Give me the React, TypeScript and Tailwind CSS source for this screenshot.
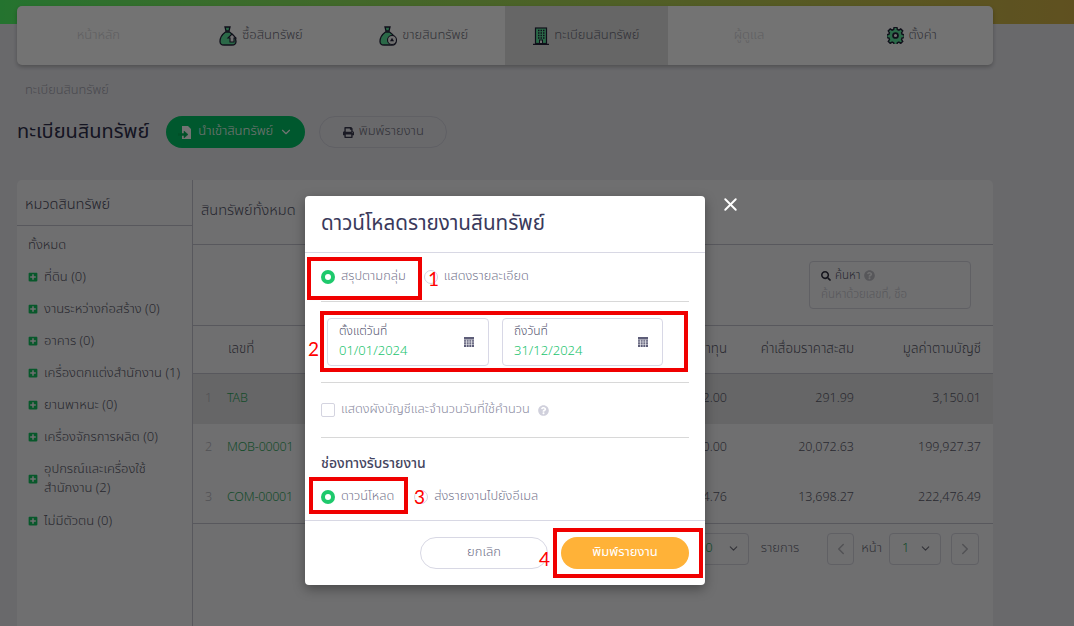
// Asset register page with the download-report dialog open and red annotation boxes on top.
import { ChevronDown, ChevronLeft, ChevronRight, X } from 'lucide-react';
import { FaPlusSquare, FaPrint, FaQuestionCircle, FaSearch } from 'react-icons/fa';

const FONT = "font-['Noto_Sans_Thai','Noto_Sans','Open_Sans',sans-serif]";

function BagIcon({ mark }: { mark: 'buy' | 'sell' }) {
	return (
		<svg width="18" height="20" viewBox="0 0 18 20">
			<path d="M6 1h5l-1 4H7z" fill="#5fe8a0" stroke="#23233a" strokeWidth="1.3" />
			<path d="M6.500 6C3 8.500 1 12 1 15.500 1 18 3 19 5 19h8c2 0 4-1 4-3.500C17 12 14 8.500 10.500 6z" fill="#5fe8a0" stroke="#23233a" strokeWidth="1.3" />
			{mark === 'buy' ? (
				<path d="M9 12l4-4 4 4h-2v4h-4v-4z" fill="#f5f5f5" stroke="#23233a" strokeWidth="1.1" />
			) : (
				<>
					<circle cx="13" cy="14" r="4.500" fill="#f5f5f5" stroke="#23233a" strokeWidth="1.1" />
					<path d="M13 11.800l2 3.400h-4z" fill="#23233a" />
				</>
			)}
		</svg>
	);
}

function BuildingIcon() {
	return (
		<svg width="16" height="18" viewBox="0 0 16 18">
			<rect x="2.500" y="1" width="11" height="15.500" fill="#5fe8a0" stroke="#23233a" strokeWidth="1.200" />
			<path d="M5 3.500h1.500M7.500 3.500H9M10 3.500h1.500M5 6h1.500M7.500 6H9M10 6h1.500M5 8.500h1.500M7.500 8.500H9M10 8.500h1.500M5 11h1.500M7.500 11H9M10 11h1.500" stroke="#23233a" strokeWidth="1.300" />
			<rect x="6.500" y="13" width="3" height="3.500" fill="#f5f5f5" stroke="#23233a" />
			<path d="M0 17.300h16" stroke="#23233a" strokeWidth="1.200" />
		</svg>
	);
}

function GearIcon() {
	return (
		<svg width="17" height="17" viewBox="0 0 24 24">
			<path d="M10 1.500h4l.6 3 2.200.9 2.600-1.700 2.800 2.800-1.700 2.600.9 2.200 3 .6v4l-3 .6-.9 2.200 1.700 2.600-2.800 2.800-2.600-1.700-2.200.9-.6 3h-4l-.6-3-2.200-.9-2.600 1.700-2.800-2.800 1.700-2.600-.9-2.200-3-.6v-4l3-.6.9-2.200-1.700-2.600 2.800-2.800 2.600 1.700 2.200-.9z" transform="translate(0 -1)" fill="#5fe8a0" stroke="#23233a" strokeWidth="2" />
			<circle cx="12" cy="12" r="3.500" fill="#f5f5f5" stroke="#23233a" strokeWidth="2.500" />
		</svg>
	);
}

function ImportIcon() {
	return (
		<svg width="14" height="15" viewBox="0 0 14 15">
			<path d="M4 1h6l3 3v10H4z" fill="#fff" />
			<path d="M0 8.500h6V6l4 3.500L6 13v-2.500H0z" fill="#00b45a" stroke="#00b45a" strokeWidth=".5" />
		</svg>
	);
}

function CalendarIcon() {
	return (
		<svg width="10" height="10" viewBox="0 0 10 10">
			<rect width="10" height="10" fill="#5d5d78" />
			<path d="M0 2.800h10M0 5h10M0 7.300h10M2.500 2.800V10M5 2.800V10M7.500 2.800V10" stroke="#fff" strokeWidth=".6" />
		</svg>
	);
}

const navItems = [
	{ label: 'หน้าหลัก', muted: true },
	{ label: 'ซื้อสินทรัพย์', icon: <BagIcon mark="buy" /> },
	{ label: 'ขายสินทรัพย์', icon: <BagIcon mark="sell" /> },
	{ label: 'ทะเบียนสินทรัพย์', icon: <BuildingIcon />, active: true },
	{ label: 'ผู้ดูแล', muted: true },
	{ label: 'ตั้งค่า', icon: <GearIcon /> },
];

const categories = [
	{ label: 'ที่ดิน (0)' },
	{ label: 'งานระหว่างก่อสร้าง (0)' },
	{ label: 'อาคาร (0)' },
	{ label: 'เครื่องตกแต่งสำนักงาน (1)' },
	{ label: 'ยานพาหนะ (0)' },
	{ label: 'เครื่องจักรการผลิต (0)' },
	{ label: 'อุปกรณ์และเครื่องใช้สำนักงาน (2)', wrap: true },
	{ label: 'ไม่มีตัวตน (0)' },
];

const rows = [
	{ no: 1, code: 'TAB', cost: '3,442.00', dep: '291.99', book: '3,150.01', shade: true },
	{ no: 2, code: 'MOB-00001', cost: '220,000.00', dep: '20,072.63', book: '199,927.37' },
	{ no: 3, code: 'COM-00001', cost: '236,174.76', dep: '13,698.27', book: '222,476.49' },
];

function Radio({ on, label }: { on?: boolean; label: string }) {
	return (
		<label className="flex items-center gap-[6px]">
			{on ? (
				<span className="flex h-[14px] w-[14px] items-center justify-center rounded-full bg-[#1ec96c]">
					<span className="h-[6px] w-[6px] rounded-full bg-white" />
				</span>
			) : (
				<span className="h-[14px] w-[14px] rounded-full border border-[#d4d4e0] bg-white" />
			)}
			<span className="text-[12.800px] font-light text-[#77778f]">{label}</span>
		</label>
	);
}

function DateField({ label, value, className }: { label: string; value: string; className: string }) {
	return (
		<div className={'flex h-[48px] items-center justify-between rounded-[4px] border border-[#d8d8e6] pl-[11px] pr-[14px] ' + className}>
			<div className="flex flex-col">
				<span className="text-[12px] font-light leading-[16px] text-[#55556f]">{label}</span>
				<span className="pt-[2px] text-[13px] leading-[20px] font-light text-[#22c46e]">{value}</span>
			</div>
			<CalendarIcon />
		</div>
	);
}

function Mark({ className }: { className: string }) {
	return <div className={'pointer-events-none absolute border-[4px] border-[#f00000] ' + className} />;
}

function Digit({ className, children }: { className: string; children: React.ReactNode }) {
	return <span className={"absolute font-['Lato',sans-serif] text-[19px] font-normal leading-none text-[#ff0000] " + className}>{children}</span>;
}

export default function App() {
	return (
		<div className={'relative h-[626px] w-[1074px] overflow-hidden bg-[#e9e9ee] font-light ' + FONT}>
			<div className="h-[24px] bg-gradient-to-r from-[#50ff68] to-[#d3b247]" />

			<div className="-mt-[18px] pl-[17px] pr-[81px]">
				<nav className="flex h-[59px] overflow-hidden rounded-[5px] bg-white shadow-[0_2px_4px_rgba(0,0,0,0.25)]">
					{navItems.map((n) => (
						<div
							key={n.label}
							className={
								'flex flex-1 items-center justify-center gap-[5px] text-[13px] ' +
								(n.active ? 'bg-[#e2e2e2] ' : '') +
								(n.muted ? 'text-[#d4d4d8]' : 'text-[#6f6f7c]')
							}
						>
							{n.icon}
							<span>{n.label}</span>
						</div>
					))}
				</nav>

				<div className="mt-[15px] pl-[8px] text-[12.800px] leading-[20px] text-[#a4a4ae]">ทะเบียนสินทรัพย์</div>

				<div className="mt-[16px] flex h-[32px] items-center">
					<h1 className="text-[20px] font-normal text-[#2f2f4c]">ทะเบียนสินทรัพย์</h1>
					<button type="button" className="ml-[17px] flex h-[32px] w-[139px] items-center justify-center gap-[6px] rounded-full bg-[#00c466] text-[13px] text-white">
						<ImportIcon />
						นำเข้าสินทรัพย์
						<ChevronDown size={14} />
					</button>
					<button type="button" className="ml-[14px] flex h-[32px] w-[128px] items-center justify-center gap-[5px] rounded-full border border-[#d4d4de] text-[13px] text-[#6f6f7c]">
						<FaPrint size={11} className="text-[#3a3a50]" />
						พิมพ์รายงาน
					</button>
				</div>

				<div className="mt-[32px] flex h-[446px] rounded-t-[5px] bg-[#f6f6f8]">
					<aside className="w-[176px] shrink-0 border-r border-[#c4c4ce]">
						<div className="flex h-[46px] items-center border-b border-[#c4c4ce] pl-[8px] pt-[7px] text-[14.600px] text-[#4b4b60]">หมวดสินทรัพย์</div>
						<div className="pl-[11px] pt-[4px] text-[13px] text-[#585868]">
							<div className="flex h-[31px] items-center">ทั้งหมด</div>
							{categories.map((c) => (
								<div key={c.label} className={'flex min-h-[32px] items-center gap-[6px] leading-[19px] ' + (c.wrap ? 'py-[7px]' : '')}>
									<FaPlusSquare size={10} className="shrink-0 text-[#12c45f]" />
									<span className={c.wrap ? 'w-[130px]' : 'whitespace-nowrap'}>{c.label}</span>
								</div>
							))}
						</div>
					</aside>

					<main className="min-w-0 flex-1">
						<div className="flex h-[65px] items-center border-b border-[#c4c4ce] pl-[8px] text-[14.600px] text-[#55556a]">สินทรัพย์ทั้งหมด</div>
						<div className="flex h-[81px] items-start justify-end border-b border-[#c4c4ce] pr-[22px] pt-[16px]">
							<div className="h-[48px] w-[162px] rounded-[4px] border border-[#d4d4de] pl-[11px] pt-[4px]">
								<div className="flex items-center gap-[4px] text-[11.500px] leading-[19px] text-[#55556a]">
									<FaSearch size={10} className="text-[#2f2f40]" />
									ค้นหา
									<FaQuestionCircle size={11} className="text-[#c0c0c8]" />
								</div>
								<div className="text-[11.500px] leading-[19px] text-[#c4c4cc]">ค้นหาด้วยเลขที่, ชื่อ</div>
							</div>
						</div>

						<div className="flex h-[48px] items-center border-b border-[#c4c4ce] pr-[12px] text-[13.300px] text-[#585868]">
							<span className="ml-[35px] flex-1">เลขที่</span>
							<span className="w-[80px] text-right">ราคาทุน</span>
							<span className="w-[127px] text-right">ค่าเสื่อมราคาสะสม</span>
							<span className="w-[127px] text-right">มูลค่าตามบัญชี</span>
						</div>
						{rows.map((r) => (
							<div key={r.no} className={'flex h-[49.500px] items-center pr-[12px] text-[12.500px] leading-[20px] text-[#5c5c6c] ' + (r.shade ? 'bg-[#e2e2e4]' : '')}>
								<span className="ml-[12px] w-[22px] leading-[20px] text-[#b4b4bc]">{r.no}</span>
								<span className="flex-1 text-[12.500px] leading-[20px] tracking-[-0.2px] text-[#30a860]">{r.code}</span>
								<span className="w-[80px] text-right">{r.cost}</span>
								<span className="w-[127px] text-right">{r.dep}</span>
								<span className="w-[127px] text-right">{r.book}</span>
							</div>
						))}
						<div className="flex h-[51px] items-center justify-end border-t border-[#c4c4ce] pr-[14px] text-[13px] text-[#6f6f7c]">
							<div className="flex h-[32px] w-[60px] items-center justify-between rounded-[4px] border border-[#d4d4de] px-[8px]">
								<span className="text-[#30a860]">10</span>
								<ChevronDown size={13} />
							</div>
							<span className="ml-[12px]">รายการ</span>
							<div className="ml-[28px] flex h-[32px] w-[27px] items-center justify-center rounded-[4px] border border-[#d4d4de] text-[#b4b4bc]">
								<ChevronLeft size={18} />
							</div>
							<span className="ml-[7px]">หน้า</span>
							<div className="ml-[7px] flex h-[32px] w-[52px] items-center justify-between rounded-[4px] border border-[#d4d4de] pl-[12px] pr-[8px]">
								<span className="text-[#30a860]">1</span>
								<ChevronDown size={13} />
							</div>
							<div className="ml-[10px] flex h-[32px] w-[28px] items-center justify-center rounded-[4px] border border-[#d4d4de] text-[#b4b4bc]">
								<ChevronRight size={18} />
							</div>
						</div>
					</main>
				</div>
			</div>

			{/* dim layer + dialog */}
			<div className="absolute inset-0 bg-black/55" />
			<X size={21} strokeWidth={2.200} className="absolute left-[719.500px] top-[194px] text-white" />

			<div className="absolute left-[305px] top-[196px] w-[400px] rounded-[4px] bg-white shadow-[0_4px_12px_rgba(0,0,0,0.35)]">
				<div className="flex h-[57px] items-center border-b border-[#d8d8e4] pl-[16px] text-[20.700px] font-normal text-[#3a3a5c]">ดาวน์โหลดรายงานสินทรัพย์</div>

				<div className="px-[16px]">
					<div className="flex h-[49px] items-center gap-[18px] border-b border-[#d8d8d8]">
						<Radio on label="สรุปตามกลุ่ม" />
						<Radio label="แสดงรายละเอียด" />
					</div>
					<div className="flex h-[81px] items-center gap-[13px] border-b border-[#d8d8d8] pl-[6px]">
						<DateField label="ตั้งแต่วันที่" value="01/01/2024" className="w-[162px]" />
						<DateField label="ถึงวันที่" value="31/12/2024" className="w-[161px]" />
					</div>
					<div className="flex h-[55px] items-center gap-[6px] border-b border-[#d8d8d8]">
						<span className="h-[14px] w-[14px] rounded-[2px] border border-[#d4d4e0]" />
						<span className="text-[12.800px] text-[#8a8aa0]">แสดงผังบัญชีและจำนวนวันที่ใช้คำนวน</span>
						<FaQuestionCircle size={11} className="ml-[2px] text-[#d0d0dc]" />
					</div>
					<div className="pt-[13px] text-[14px] font-medium leading-[25px] text-[#46465f]">ช่องทางรับรายงาน</div>
					<div className="flex h-[44px] items-center gap-[20px] pb-[2px]">
						<Radio on label="ดาวน์โหลด" />
						<Radio label="ส่งรายงานไปยังอีเมล" />
					</div>
				</div>

				<div className="flex h-[65px] items-center justify-end gap-[13px] border-t border-[#d8d8e4] pr-[16px]">
					<button type="button" className="h-[32px] w-[128px] rounded-full border border-[#d8d8e4] text-[13px] text-[#6f6f88]">ยกเลิก</button>
					<button type="button" className="h-[32px] w-[128px] rounded-full bg-[#ffb238] text-[13px] font-normal text-white">พิมพ์รายงาน</button>
				</div>

				{/* red annotations drawn over the dialog */}
				<Mark className="left-[2px] top-[61px] h-[43px] w-[115px]" />
				<Mark className="left-[15px] top-[115px] h-[61px] w-[368px]" />
				<Mark className="left-[4px] top-[281px] h-[37px] w-[99px]" />
				<Mark className="left-[248px] top-[332px] h-[50px] w-[150px]" />
				<Digit className="left-[123px] top-[73px]">1</Digit>
				<Digit className="left-[3px] top-[143px]">2</Digit>
				<Digit className="left-[109px] top-[291px]">3</Digit>
				<Digit className="left-[234px] top-[353px]">4</Digit>
			</div>
		</div>
	);
}
